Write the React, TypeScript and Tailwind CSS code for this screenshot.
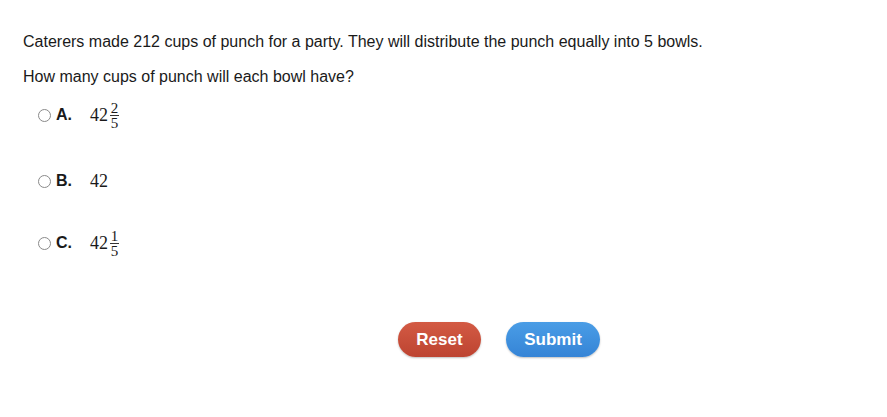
const options = [
  { letter: "A.", whole: "42", num: "2", den: "5", gap: "mt-[12px]" },
  { letter: "B.", whole: "42", gap: "mt-[32px]" },
  { letter: "C.", whole: "42", num: "1", den: "5", gap: "mt-[28px]" },
];

function Radio() {
  return <span className="inline-block w-[13px] h-[13px] rounded-full border border-[#8a8a8a] bg-white" />;
}

export default function App() {
  return (
    <div className="w-[887px] h-[417px] bg-white text-[#1a1a1a] font-['Liberation_Sans',Arial,sans-serif] text-[16px]">
      <div className="pl-[23px] pt-[32px]">
        <p className="leading-[19px]">
          Caterers made 212 cups of punch for a party. They will distribute the punch equally into 5 bowls.
        </p>
        <p className="leading-[19px] mt-[16px]">How many cups of punch will each bowl have?</p>
        <div className="flex flex-col pl-[15px]">
          {options.map((o) => (
            <div key={o.letter} className={`flex items-center h-[34px] ${o.gap}`}>
              <Radio />
              <span className="font-bold ml-[5px] w-[34px]">{o.letter}</span>
              <span className="flex items-center font-['Liberation_Serif',serif] text-[18px]">
                <span>{o.whole}</span>
                {o.num && (
                  <span className="flex flex-col items-center ml-[2px] text-[15px] leading-[14px]">
                    <span className="h-[14px]">{o.num}</span>
                    <span className="w-[9px] h-px bg-[#333]" />
                    <span className="h-[14px]">{o.den}</span>
                  </span>
                )}
              </span>
            </div>
          ))}
        </div>
      </div>
      <div className="flex gap-[25px] pl-[398px] mt-[62px]">
        <button className="w-[83px] h-[35px] rounded-full bg-gradient-to-b from-[#d35a44] to-[#bd4431] text-white font-bold text-[17px] shadow-[0_1px_2px_rgba(0,0,0,0.25)]">
          Reset
        </button>
        <button className="w-[94px] h-[35px] rounded-full bg-gradient-to-b from-[#4a9de6] to-[#3584d6] text-white font-bold text-[17px] shadow-[0_1px_2px_rgba(0,0,0,0.25)]">
          Submit
        </button>
      </div>
    </div>
  );
}
